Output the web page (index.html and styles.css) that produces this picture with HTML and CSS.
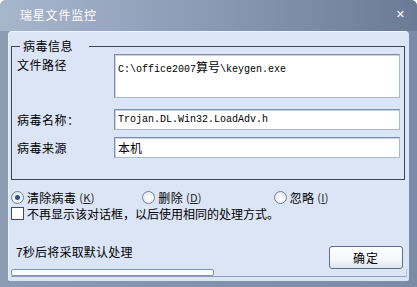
FILE: index.html
```html
<!DOCTYPE html>
<html>
<head>
    <title>瑞星文件监控</title>
    <link rel="stylesheet" href="styles.css">
</head>
<body>
    <div class="window">
        <div class="titlebar">
            <span class="title">瑞星文件监控</span>
            <span class="close">✕</span>
        </div>
        <div class="panel">
            <fieldset class="group">
                <legend>病毒信息</legend>
                <div class="row row-path">
                    <label>文件路径</label>
                    <div class="field area">C:\office2007<span class="cjk">算号</span>\keygen.exe</div>
                </div>
                <div class="row row-name">
                    <label>病毒名称：</label>
                    <div class="field">Trojan.DL.Win32.LoadAdv.h</div>
                </div>
                <div class="row row-src">
                    <label>病毒来源</label>
                    <div class="field"><span class="cjk">本机</span></div>
                </div>
            </fieldset>

            <div class="options">
                <div class="opt"><span class="radio on"></span>清除病毒 <span class="key">(<u>K</u>)</span></div>
                <div class="opt"><span class="radio"></span>删除 <span class="key">(<u>D</u>)</span></div>
                <div class="opt"><span class="radio"></span>忽略 <span class="key">(<u>I</u>)</span></div>
            </div>

            <div class="check"><span class="box"></span>不再显示该对话框，以后使用相同的处理方式。</div>

            <div class="footer">
                <span class="countdown">7秒后将采取默认处理</span>
                <button class="ok">确定</button>
            </div>

            <div class="progress"><div class="fill" style="width: 201px"></div></div>
        </div>
    </div>
</body>
</html>
```

FILE: styles.css
```css
body {
    margin: 0;
    font-family: "Noto Sans CJK SC", "Liberation Sans", sans-serif;
    font-size: 12px;
    color: #000;
}

.window {
    width: 417px;
    height: 287px;
    box-sizing: border-box;
    background: linear-gradient(to right, #8c9bb4, #7b8aa5);
    border-radius: 6px 6px 0 0;
    display: flex;
    flex-direction: column;
}

.titlebar {
    height: 31px;
    display: flex;
    align-items: center;
    justify-content: space-between;
    padding: 0 12px 0 20px;
    background: linear-gradient(to right, #a8b6cc, #8797b2 55%, #6b7a95);
    border-radius: 6px 6px 0 0;
    color: #fff;
}

.title {
    font-size: 12px;
    letter-spacing: 0.8px;
    margin-top: -2px;
}

.close {
    font-size: 11px;
    font-weight: bold;
    margin-top: -2px;
    font-family: "DejaVu Sans", sans-serif;
}

.panel {
    flex: 1;
    margin: 0 8px 6px 8px;
    padding: 7px 4px 0 2px;
    background: #dbe5f6;
    border-top: 1px solid #eef3fc;
    border-left: 1px solid #e9f0fb;
    border-radius: 4px 4px 2px 2px;
    display: flex;
    flex-direction: column;
}

/* group box */
.group {
    margin: 0;
    padding: 1px 4px 21px 5px;
    border: 1px solid #3c4658;
    border-radius: 0;
}

.group legend {
    padding: 0 16px 0 3px;
    margin-left: 3px;
    line-height: 14px;
    letter-spacing: 0.5px;
}

.row {
    display: flex;
    align-items: center;
}

.row label {
    width: 97px;
    flex: none;
    letter-spacing: 0.5px;
}

.row-path {
    align-items: flex-start;
}

.row-path label {
    margin-top: 2px;
}

.row-name {
    margin-top: 11px;
}

.row-src {
    margin-top: 7px;
}

.field {
    flex: 1;
    height: 21px;
    box-sizing: border-box;
    background: #fff;
    border: 1px solid #7d8fae;
    border-right-color: #aab8d0;
    border-bottom-color: #aab8d0;
    box-shadow: inset 1px 1px 0 #c9d2e2;
    padding: 3px 3px 0 3px;
    font-family: "Liberation Mono", monospace;
    font-size: 10px;
    line-height: 14px;
    white-space: nowrap;
}

.field.area {
    height: 44px;
    padding-top: 5px;
}

.cjk {
    font-family: "Noto Sans CJK SC", sans-serif;
    font-size: 12px;
}

/* options */
.options {
    display: flex;
    margin-top: 9px;
    height: 16px;
    align-items: center;
}

.opt {
    width: 135px;
    display: flex;
    align-items: center;
    letter-spacing: 0.3px;
}

.key {
    font-size: 11px;
    margin-left: 3px;
    color: #222;
}

.radio {
    width: 11px;
    height: 11px;
    border-radius: 50%;
    border: 1px solid #6f7f98;
    background: radial-gradient(circle at 60% 60%, #fff, #dde4ee);
    margin-right: 3px;
    position: relative;
}

.radio.on::after {
    content: "";
    position: absolute;
    left: 3px;
    top: 3px;
    width: 5px;
    height: 5px;
    border-radius: 50%;
    background: #2c4f86;
}

.check {
    display: flex;
    align-items: center;
    margin-top: 1px;
    height: 14px;
}

.check .box {
    width: 11px;
    height: 11px;
    border: 1px solid #3e4a5e;
    background: #fff;
    margin-right: 3px;
}

/* footer */
.footer {
    display: flex;
    justify-content: space-between;
    align-items: flex-end;
    margin-top: 23px;
}

.countdown {
    margin-left: 5px;
    margin-bottom: 9px;
    letter-spacing: 0.2px;
}

.ok {
    width: 74px;
    height: 23px;
    margin-right: 2px;
    border: 1px solid #5d6f8f;
    border-radius: 3px;
    background: linear-gradient(#ffffff, #f3f6fb 60%, #dfe6f1);
    font-family: "Noto Sans CJK SC", sans-serif;
    font-size: 12px;
    letter-spacing: 1px;
    color: #000;
    padding: 0;
}

.progress {
    height: 7px;
    margin: 0 -2px 0 0;
    border-bottom: 1px solid #8e9fbc;
    border-right: 1px solid #b5c3da;
}

.progress .fill {
    height: 5px;
    border: 1px solid #8395b6;
    border-radius: 2px;
    background: linear-gradient(#f4f7fc, #ffffff);
}
```
